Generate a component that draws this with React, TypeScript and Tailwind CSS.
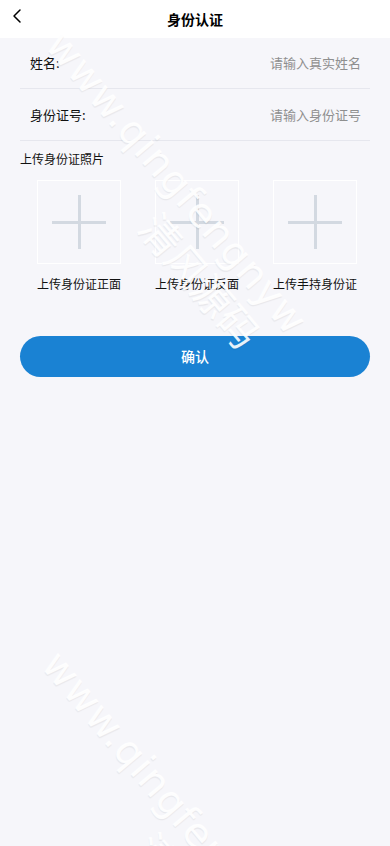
import { ChevronLeft } from "lucide-react";

const font = { fontFamily: '"Noto Sans CJK SC", "Noto Sans", sans-serif' };

function Watermark({ top, left }: { top: number; left: number }) {
  return (
    <div
      aria-hidden
      className="pointer-events-none absolute origin-top-left rotate-[50deg] select-none whitespace-nowrap leading-none text-white/90 [text-shadow:1px_1px_1px_rgba(0,0,0,0.06)]"
      style={{ top, left }}
    >
      <div className="text-[40px] tracking-[1px]" style={{ fontFamily: '"DejaVu Sans", sans-serif' }}>
        www.qingfengnyw
      </div>
      <div className="mt-[4px] pl-[200px] text-[40px]">清风源码</div>
    </div>
  );
}

function Row({ label, placeholder, h }: { label: string; placeholder: string; h: string }) {
  return (
    <div className={`flex items-center justify-between border-b border-[#e6e7ee] pl-[10px] pr-[9px] ${h}`}>
      <span className="text-[13px] text-[#111]">{label}</span>
      <input
        placeholder={placeholder}
        className="w-[160px] bg-transparent text-right text-[13px] text-[#333] outline-none placeholder:text-[#8f8f8f]"
        style={font}
      />
    </div>
  );
}

function Upload({ label }: { label: string }) {
  return (
    <div className="flex w-[84px] flex-col items-center">
      <div className="relative flex h-[84px] w-[84px] items-center justify-center border border-white">
        <div className="absolute h-[3px] w-[54px] bg-[#d3d9e1]" />
        <div className="absolute h-[54px] w-[3px] bg-[#d3d9e1]" />
      </div>
      <span className="mt-[11px] whitespace-nowrap text-[12px] text-[#111]">{label}</span>
    </div>
  );
}

export default function App() {
  return (
    <div className="relative min-h-[846px] overflow-hidden bg-[#f6f6fa]" style={font}>
      <header className="relative flex h-[38px] items-center justify-center bg-white">
        <ChevronLeft className="absolute left-[5px] top-[4px] h-[24px] w-[24px] text-black" strokeWidth={1.5} />
        <h1 className="text-[14px] font-bold text-black">身份认证</h1>
      </header>

      <div className="px-[20px]">
        <Row label="姓名:" placeholder="请输入真实姓名" h="h-[51px]" />
        <Row label="身份证号:" placeholder="请输入身份证号" h="h-[52px]" />
        <p className="mt-[9px] text-[12px] text-[#111]">上传身份证照片</p>
        <div className="mt-[12px] flex gap-[34px] pl-[17px]">
          <Upload label="上传身份证正面" />
          <Upload label="上传身份证反面" />
          <Upload label="上传手持身份证" />
        </div>
        <button className="mt-[43px] flex h-[41px] w-full items-center justify-center rounded-full bg-[#1a82d3] text-[14px] font-medium text-white">
          确认
        </button>
      </div>

      <Watermark top={24} left={70} />
      <Watermark top={644} left={66} />
    </div>
  );
}
